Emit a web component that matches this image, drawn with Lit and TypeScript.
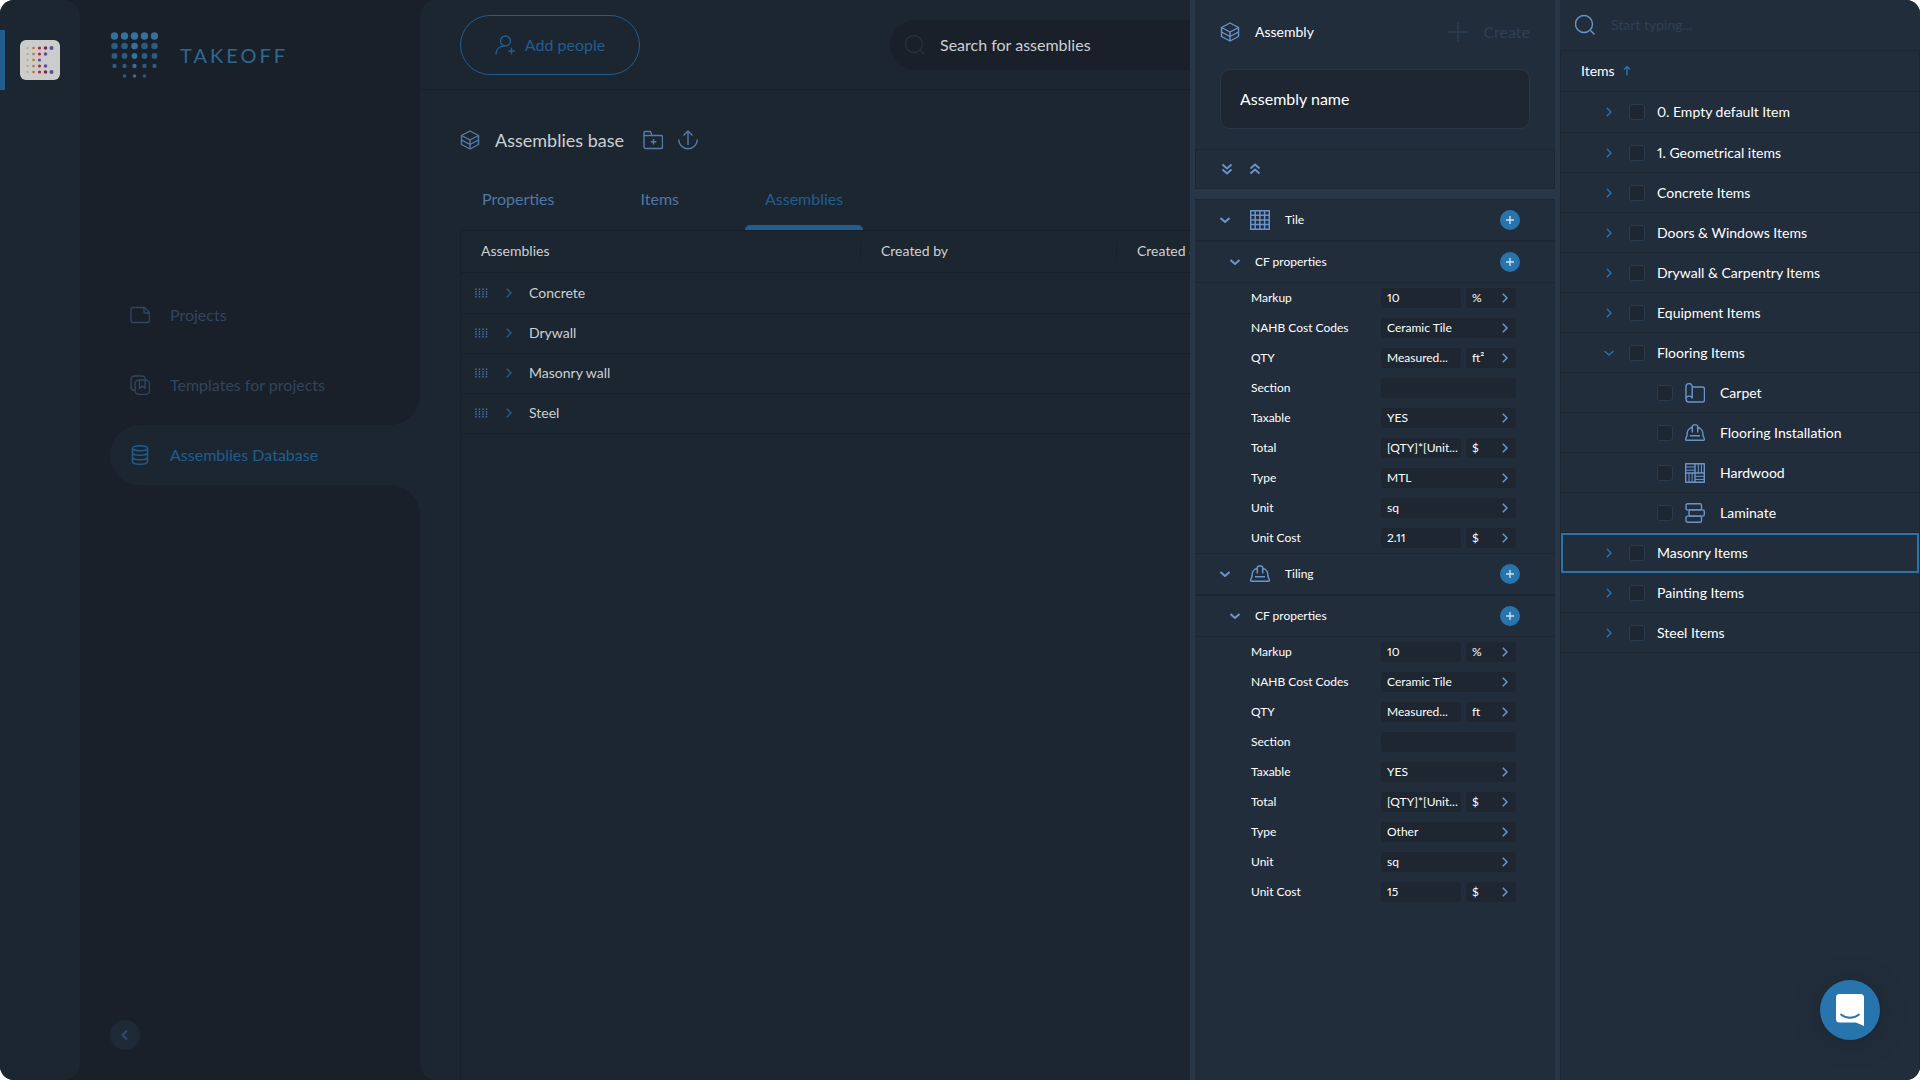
import { LitElement, html, css, svg, nothing } from "lit";
import { customElement, property, state } from "lit/decorators.js";
import { classMap } from "lit/directives/class-map.js";

const icons: Record<string, unknown> = {
  cube: svg`<path d="M10 1 18.5 5.5v9L10 19l-8.500-4.500v-9z"/><path d="M1.500 5.500 10 10l8.500-4.500M1.500 10l8.500 4.500L18.500 10M10 10v9"/>`,
  addPerson: svg`<circle cx="10.500" cy="6" r="5"/><path d="M1 19.500c0-5 3-8.500 8.500-8.500M16.500 12.500v7M13 16h7"/>`,
  search: svg`<circle cx="9" cy="9" r="8.500"/><path d="m15.500 15.500 4 4"/>`,
  project: svg`<path d="M3 2.500h11.500l5 5v8a2 2 0 0 1-2 2H3a2 2 0 0 1-2-2v-11a2 2 0 0 1 2-2z"/><path d="M14 2.500V7a1 1 0 0 0 1 1h4.500"/>`,
  templates: svg`<path d="M5 15.500c-2.500 0-4-1.500-4-4V5c0-2.500 1.500-4 4-4h6.500c2.500 0 4 1.500 4 4"/><rect x="5" y="5" width="14.500" height="14.500" rx="4"/><path d="M9.500 5v8.500l2.800-2.500 2.700 2.500V5"/>`,
  database: svg`<ellipse cx="10" cy="3.200" rx="7.500" ry="2.500"/><path d="M2.500 3.200v13.600c0 3.300 15 3.300 15 0V3.200M2.500 7.800c0 3.300 15 3.300 15 0M2.500 12.300c0 3.300 15 3.300 15 0"/>`,
  folder: svg`<path d="M1 17V2.500a1 1 0 0 1 1-1h5.500l1.500 4h9a1.500 1.500 0 0 1 1.500 1.500v10a1.500 1.500 0 0 1-1.500 1.500H2.500A1.500 1.500 0 0 1 1 17zM1 5.500h8M10.500 9v5.500M7.800 11.800h5.500"/>`,
  upload: svg`<path d="M10 15V1M5.500 5.500 10 1l4.500 4.500M.7 9.500a9.300 9.300 0 0 0 18.600 0"/>`,
  plus: svg`<path d="M10 .5v19M.5 10h19"/>`,
  plusSmall: svg`<path d="M10 6v8M6 10h8"/>`,
  right: svg`<path d="m7.800 5.800 4.200 4.200-4.200 4.200"/>`,
  left: svg`<path d="m12 5.500-4.500 4.500 4.500 4.500"/>`,
  down: svg`<path d="m5.500 8 4.500 4 4.500-4"/>`,
  expandAll: svg`<path d="m5.500 5.500 4.500 4 4.500-4M5.500 10.500l4.500 4 4.500-4"/>`,
  collapseAll: svg`<path d="m5.500 9.500 4.500-4 4.500 4M5.500 14.500l4.500-4 4.500 4"/>`,
  sortUp: svg`<path d="M10 14.500v-9M7 8.500l3-3 3 3"/>`,
  drag: svg`<path stroke-dasharray="1.500 1" d="M5 5.500v9M8.500 5.500v9M12 5.500v9M15.500 5.500v9"/>`,
  tile: svg`<path d="M.7.700h18.600v18.600H.7zM5.200.700v18.600M9.900.700v18.600M14.600.700v18.600M.7 5.200h18.600M.7 9.900h18.600M.7 14.600h18.600"/>`,
  helmet: svg`<path d="M2.200 12.500C1.700 8.500 3.700 5 7.300 4.200M12.700 4.200c3.600.800 5.600 4.300 5.100 8.300M2.200 12l-1.500 3.800a1 1 0 0 0 1 1.500h16.600a1 1 0 0 0 1-1.500L17.800 12M7.300 9.500V3.800c0-1.200.900-1.900 1.900-1.900h1.600c1 0 1.900.700 1.900 1.900v5.700M5 12.800h10"/>`,
  carpet: svg`<path d="M1 16V3.700a3.100 3.100 0 0 1 6.200 0v11.800M7.200 4h10.300a2 2 0 0 1 2 2v11a2 2 0 0 1-2 2H4a3 3 0 0 1-3-3c.3-3.600 5.600-3.800 6.200-.5"/>`,
  hardwood: svg`<path d="M.7.700h18.600v18.600H.7zM10 .7v18.600M.7 10h18.600"/><path stroke-width="1" d="M.7 4H10M.7 7.200H10M13.300.700V10M16.400.700V10M4 10v9.300M7.100 10v9.300M10 13.300h9.300M10 16.400h9.300"/>`,
  laminate: svg`<rect x="1" y=".7" width="15.500" height="6.200" rx="1.500"/><rect x="4" y="6.900" width="15.300" height="6.200" rx="1.500"/><rect x="1" y="13.100" width="15.500" height="6.200" rx="1.500"/>`,
};

const icon = (name: string, cls = "") => html`
  <svg class="icon ${cls}" viewBox="0 0 20 20" aria-hidden="true">${icons[name]}</svg>
`;

const base = css`
  *,
  *::before,
  *::after {
    box-sizing: border-box;
  }
  button,
  input {
    font: inherit;
    color: inherit;
    margin: 0;
    padding: 0;
    border: 0;
    background: none;
    outline: none;
  }
  button {
    cursor: pointer;
    text-align: left;
  }
  a {
    color: inherit;
    text-decoration: none;
  }
  ul {
    list-style: none;
    margin: 0;
    padding: 0;
  }
  .icon {
    display: block;
    flex: none;
    width: 20px;
    height: 20px;
    fill: none;
    stroke: currentColor;
    stroke-width: 1.4;
    stroke-linejoin: round;
  }
`;

@customElement("nav-sidebar")
class NavSidebar extends LitElement {
  @state() private active = "Assemblies Database";

  static styles = [
    base,
    css`
      :host {
        display: flex;
        flex-direction: column;
        flex: none;
        width: 340px;
        padding: 32px 0 30px 30px;
      }
      .brand {
        display: flex;
        align-items: center;
        gap: 22px;
        color: #2d6991;
        font-size: 20px;
        line-height: 46px;
        letter-spacing: 3px;
      }
      .dots {
        width: 48px;
        height: 46px;
        fill: #2a5c81;
      }
      .dots .lit {
        fill: #34719c;
      }
      nav {
        margin-top: 207px;
      }
      ul {
        display: grid;
        gap: 10px;
      }
      .link {
        display: flex;
        align-items: center;
        gap: 20px;
        height: 60px;
        padding-left: 20px;
        color: #31455e;
        border-radius: 30px 0 0 30px;
        position: relative;
      }
      .link.active {
        background: #1c2630;
        color: #215d8f;
      }
      .link.active::before,
      .link.active::after {
        content: "";
        position: absolute;
        right: 0;
        width: 30px;
        height: 30px;
      }
      .link.active::before {
        bottom: 100%;
        background: radial-gradient(circle at 0 0, transparent 30px, #1c2630 30px);
      }
      .link.active::after {
        top: 100%;
        background: radial-gradient(circle at 0 100%, transparent 30px, #1c2630 30px);
      }
      .collapse {
        display: grid;
        place-items: center;
        width: 30px;
        height: 30px;
        margin-top: auto;
        border-radius: 50%;
        background: #1e2a36;
        color: #35496a;
      }
      .collapse .icon {
        stroke-width: 2;
      }
    `,
  ];

  private dots() {
    const radii = [3.7, 3.3, 2.9, 2.2, 1.8];
    return radii.flatMap((r, row) =>
      [0, 1, 2, 3, 4]
        .filter((col) => row < 4 || (col > 0 && col < 4))
        .map(
          (col) => svg`<circle class=${row === 0 || col === 2 ? "lit" : "dim"}
            cx=${4.5 + col * 10} cy=${4 + row * 10} r=${r}></circle>`
        )
    );
  }

  render() {
    const links = [
      ["project", "Projects"],
      ["templates", "Templates for projects"],
      ["database", "Assemblies Database"],
    ];
    return html`
      <div class="brand">
        <svg class="dots" viewBox="0 0 48 46" aria-hidden="true">${this.dots()}</svg>
        <span>TAKEOFF</span>
      </div>
      <nav>
        <ul>
          ${links.map(
            ([glyph, label]) => html`<li>
              <a
                href="#"
                class=${classMap({ link: true, active: label === this.active })}
                @click=${(e: Event) => {
                  e.preventDefault();
                  this.active = label;
                }}
                >${icon(glyph)}<span>${label}</span></a
              >
            </li>`
          )}
        </ul>
      </nav>
      <button class="collapse" aria-label="Collapse menu">${icon("left")}</button>
    `;
  }
}

@customElement("assemblies-page")
class AssembliesPage extends LitElement {
  @state() private tab = "Assemblies";

  static styles = [
    base,
    css`
      :host {
        display: block;
        flex: 1;
        min-width: 0;
        overflow: hidden;
        background: #1c2630;
        border-radius: 16px 0 0 16px;
        color: #cdd0d3;
      }
      header {
        display: flex;
        align-items: center;
        gap: 250px;
        height: 90px;
        padding-left: 40px;
        border-bottom: 1px solid #192029;
      }
      .add {
        display: flex;
        align-items: center;
        justify-content: center;
        gap: 10px;
        flex: none;
        width: 180px;
        height: 60px;
        border: 1px solid #215d8f;
        border-radius: 30px;
        color: #215d8f;
      }
      .search {
        display: flex;
        align-items: center;
        gap: 15px;
        flex: none;
        width: 500px;
        height: 50px;
        padding-left: 15px;
        border-radius: 25px;
        background: #192029;
      }
      .search .icon {
        color: #26313e;
      }
      .search input {
        flex: 1;
      }
      .search input::placeholder {
        color: #cdd0d3;
        opacity: 1;
      }
      .title {
        display: flex;
        align-items: center;
        gap: 15px;
        padding: 35px 0 0 40px;
        color: #567cab;
      }
      h1 {
        min-width: 133px;
        margin: 0;
        font-size: 18px;
        font-weight: 400;
        line-height: 30px;
        color: #cdd0d3;
      }
      .tabs {
        display: flex;
        gap: 46px;
        padding: 15px 0 0 42px;
      }
      .tab {
        height: 60px;
        padding: 0 20px 2px;
        color: #4f77a8;
      }
      .tab.active {
        color: #215d8f;
        position: relative;
      }
      .tab.active::after {
        content: "";
        position: absolute;
        left: 0;
        right: 0;
        bottom: 0;
        height: 5px;
        border-radius: 5px 5px 0 0;
        background: #215d8f;
      }
      .sheet {
        margin-left: 40px;
        min-height: calc(100vh - 230px);
        border: solid #192029;
        border-width: 1px 0 0 1px;
      }
      table {
        width: 1060px;
        border-collapse: collapse;
        table-layout: fixed;
        font-size: 14px;
        line-height: 20px;
      }
      .first {
        width: 399px;
      }
      .second {
        width: 256px;
      }
      th,
      td {
        height: 40px;
        padding: 0;
        font-weight: 400;
        text-align: left;
        border-bottom: 1px solid #192029;
      }
      th {
        padding-left: 20px;
      }
      th,
      tbody tr:first-child td {
        height: 41px;
      }
      .head-cell {
        display: block;
      }
      th + th .head-cell {
        margin-left: -20px;
        padding-left: 20px;
        border-left: 1px solid #192029;
      }
      .name {
        display: flex;
        align-items: center;
        gap: 8px;
        padding-left: 10px;
      }
      .name span {
        padding-left: 2px;
      }
      .grip {
        color: #4c72ae;
      }
      .open {
        color: #215d8f;
      }
    `,
  ];

  render() {
    return html`
      <header>
        <button class="add">${icon("addPerson")}<span>Add people</span></button>
        <label class="search">
          ${icon("search")}
          <input type="search" placeholder="Search for assemblies" aria-label="Search for assemblies" />
        </label>
      </header>
      <div class="title">
        ${icon("cube")}
        <h1>Assemblies base</h1>
        <button aria-label="New folder">${icon("folder")}</button>
        <button aria-label="Upload">${icon("upload")}</button>
      </div>
      <div class="tabs" role="tablist">
        ${["Properties", "Items", "Assemblies"].map(
          (t) => html`<button
            role="tab"
            aria-selected=${t === this.tab}
            class=${classMap({ tab: true, active: t === this.tab })}
            @click=${() => (this.tab = t)}
          >
            ${t}
          </button>`
        )}
      </div>
      <div class="sheet">
        <table>
          <thead>
            <tr>
              <th class="first"><span class="head-cell">Assemblies</span></th>
              <th class="second"><span class="head-cell">Created by</span></th>
              <th><span class="head-cell">Created on</span></th>
            </tr>
          </thead>
          <tbody>
            ${["Concrete", "Drywall", "Masonry wall", "Steel"].map(
              (name) => html`<tr>
                <td>
                  <div class="name">
                    ${icon("drag", "grip")}
                    <button class="open" aria-label="Expand ${name}">${icon("right")}</button>
                    <span>${name}</span>
                  </div>
                </td>
                <td></td>
                <td></td>
              </tr>`
            )}
          </tbody>
        </table>
      </div>
    `;
  }
}

interface Prop {
  label: string;
  value: string;
  unit?: string;
  free?: boolean;
}

const properties = (qtyUnit: string, type: string, cost: string): Prop[] => [
  { label: "Markup", value: "10", unit: "%" },
  { label: "NAHB Cost Codes", value: "Ceramic Tile" },
  { label: "QTY", value: "Measured...", unit: qtyUnit },
  { label: "Section", value: "", free: true },
  { label: "Taxable", value: "YES" },
  { label: "Total", value: "[QTY]*[Unit...", unit: "$" },
  { label: "Type", value: type },
  { label: "Unit", value: "sq" },
  { label: "Unit Cost", value: cost, unit: "$" },
];

@customElement("assembly-section")
class AssemblySection extends LitElement {
  @property() name = "";
  @property() glyph = "tile";
  @property({ attribute: false }) props: Prop[] = [];

  static styles = [
    base,
    css`
      :host {
        display: block;
        font-size: 12px;
        line-height: 20px;
        font-variant-numeric: proportional-nums;
        border-top: 1px solid #1d2631;
      }
      .head {
        display: flex;
        align-items: center;
        height: 42px;
        padding: 0 35px 0 20px;
        border-bottom: 2px solid #1d2631;
        color: #6a95cc;
      }
      .head.sub {
        height: 41px;
        padding-left: 30px;
        border-bottom-width: 1px;
      }
      .glyph {
        margin: 0 15px 0 15px;
      }
      .head .glyph {
        stroke-width: 1.5;
      }
      .head h2,
      .head h3 {
        flex: 1;
        margin: 0;
        font-size: 12px;
        font-weight: 400;
        color: #fff;
      }
      .head h3 {
        padding-left: 10px;
      }
      .toggle .icon {
        stroke-width: 2;
      }
      .add {
        border-radius: 50%;
        background: #2874ad;
        color: #cfe0ee;
      }
      .row {
        display: grid;
        grid-template-columns: 1fr 135px;
        align-items: center;
        height: 30px;
        padding: 0 39px 0 56px;
      }
      .fields {
        display: flex;
        gap: 5px;
      }
      .field {
        display: flex;
        align-items: center;
        justify-content: space-between;
        flex: 1;
        width: 80px;
        min-width: 0;
        height: 20px;
        padding: 0 1px 0 6px;
        border-radius: 4px;
        background: #1d2631;
      }
      .unit {
        flex: none;
        width: 50px;
      }
      .field .icon {
        color: #6a95cc;
        stroke-width: 1.6;
      }
    `,
  ];

  render() {
    return html`
      <div class="head">
        <button class="toggle" aria-label="Toggle ${this.name}">${icon("down")}</button>
        ${icon(this.glyph, "glyph")}
        <h2>${this.name}</h2>
        <button class="add" aria-label="Add to ${this.name}">${icon("plusSmall")}</button>
      </div>
      <div class="head sub">
        <button class="toggle" aria-label="Toggle CF properties">${icon("down")}</button>
        <h3>CF properties</h3>
        <button class="add" aria-label="Add CF property">${icon("plusSmall")}</button>
      </div>
      ${this.props.map((p, i) => {
        const picker = !p.unit && !p.free;
        return html`<div class="row">
          <label for="f${i}">${p.label}</label>
          <div class="fields">
            ${picker
              ? html`<button class="field" id="f${i}"><span>${p.value}</span>${icon("right")}</button>`
              : html`<input class="field" id="f${i}" type="text" .value=${p.value} />`}
            ${p.unit
              ? html`<button class="field unit" aria-label="Unit of ${p.label}">
                  <span>${p.unit}</span>${icon("right")}
                </button>`
              : nothing}
          </div>
        </div>`;
      })}
    `;
  }
}

@customElement("assembly-panel")
class AssemblyPanel extends LitElement {
  static styles = [
    base,
    css`
      :host {
        display: block;
        flex: none;
        width: 370px;
        background: #222d3b;
        border: solid #283747;
        border-width: 0 5px;
      }
      header {
        display: flex;
        align-items: center;
        gap: 15px;
        height: 64px;
        padding: 0 25px;
        color: #6a95cc;
      }
      h2 {
        flex: 1;
        margin: 0;
        font-size: 14px;
        font-weight: 400;
        color: #fff;
      }
      .create {
        display: flex;
        align-items: center;
        gap: 15px;
        color: #2e4055;
      }
      .name {
        display: block;
        width: calc(100% - 50px);
        height: 60px;
        margin: 5px 25px 20px;
        padding: 0 19px 2px;
        border: 1px solid #283747;
        border-radius: 10px;
        background: #1d2631;
      }
      .name::placeholder {
        color: #fff;
        opacity: 1;
      }
      .tools {
        display: flex;
        align-items: center;
        gap: 8px;
        height: 40px;
        padding-left: 21px;
        border: 1px solid #1d2631;
        color: #6a95cc;
      }
      .tools .icon {
        stroke-width: 1.8;
      }
      .band {
        height: 10px;
        background: #283747;
      }
    `,
  ];

  render() {
    return html`
      <header>
        ${icon("cube")}
        <h2>Assembly</h2>
        <button class="create">${icon("plus")}<span>Create</span></button>
      </header>
      <input class="name" type="text" placeholder="Assembly name" aria-label="Assembly name" />
      <div class="tools">
        <button aria-label="Expand all">${icon("expandAll")}</button>
        <button aria-label="Collapse all">${icon("collapseAll")}</button>
      </div>
      <div class="band"></div>
      <assembly-section name="Tile" glyph="tile" .props=${properties("ft²", "MTL", "2.11")}></assembly-section>
      <assembly-section name="Tiling" glyph="helmet" .props=${properties("ft", "Other", "15")}></assembly-section>
    `;
  }
}

interface Item {
  name: string;
  glyph?: string;
  open?: boolean;
}

const items: Item[] = [
  { name: "0. Empty default Item" },
  { name: "1. Geometrical items" },
  { name: "Concrete Items" },
  { name: "Doors & Windows Items" },
  { name: "Drywall & Carpentry Items" },
  { name: "Equipment Items" },
  { name: "Flooring Items", open: true },
  { name: "Carpet", glyph: "carpet" },
  { name: "Flooring Installation", glyph: "helmet" },
  { name: "Hardwood", glyph: "hardwood" },
  { name: "Laminate", glyph: "laminate" },
  { name: "Masonry Items" },
  { name: "Painting Items" },
  { name: "Steel Items" },
];

@customElement("items-panel")
class ItemsPanel extends LitElement {
  @state() private selected = "Masonry Items";

  static styles = [
    base,
    css`
      :host {
        display: flex;
        flex-direction: column;
        flex: none;
        width: 360px;
        background: #222d3b;
        font-size: 14px;
        line-height: 20px;
        font-variant-numeric: proportional-nums;
      }
      .search {
        display: flex;
        align-items: center;
        gap: 16px;
        height: 50px;
        padding: 0 15px;
        color: #6a95cc;
      }
      .search input {
        flex: 1;
        color: #fff;
      }
      .search input::placeholder {
        color: #2e4055;
        opacity: 1;
      }
      .tree {
        flex: 1;
        border: 1px solid #1d2631;
        border-bottom: 0;
      }
      .head {
        display: flex;
        align-items: center;
        width: 100%;
        height: 41px;
        padding-left: 20px;
        border-bottom: 1px solid #1d2631;
      }
      .head .icon {
        margin-left: 2px;
        color: #2874ad;
      }
      .row {
        display: flex;
        align-items: center;
        height: 40px;
        padding-left: 38px;
        border-bottom: 1px solid #1d2631;
      }
      .row:first-child {
        height: 41px;
      }
      .row.child {
        padding-left: 96px;
      }
      .row.selected {
        padding-left: 36px;
        border: 2px solid #2874ad;
      }
      .arrow {
        margin-right: 10px;
        color: #2874ad;
      }
      input[type="checkbox"] {
        appearance: none;
        width: 16px;
        height: 16px;
        margin-right: 12px;
        border: 1px solid #2c3c4e;
        border-radius: 3px;
        background: #1d2631;
      }
      label {
        display: flex;
        align-items: center;
        gap: 15px;
      }
      label .icon {
        color: #6a95cc;
      }
    `,
  ];

  render() {
    return html`
      <label class="search">
        ${icon("search")}
        <input type="search" placeholder="Start typing..." aria-label="Search items" />
      </label>
      <div class="tree">
        <button class="head">Items${icon("sortUp")}</button>
        <ul>
          ${items.map(
            (item, i) => html`<li
              class=${classMap({ row: true, child: !!item.glyph, selected: item.name === this.selected })}
              @click=${() => (this.selected = item.name)}
            >
              ${item.glyph
                ? nothing
                : html`<button class="arrow" aria-label="Toggle ${item.name}">
                    ${icon(item.open ? "down" : "right")}
                  </button>`}
              <input type="checkbox" id="i${i}" />
              <label for="i${i}">${item.glyph ? icon(item.glyph) : nothing}<span>${item.name}</span></label>
            </li>`
          )}
        </ul>
      </div>
    `;
  }
}

@customElement("app-root")
class AppRoot extends LitElement {
  static styles = [
    base,
    css`
      :host {
        display: block;
        background: #fff;
        font-family: Lato, "Open Sans", sans-serif;
        font-size: 16px;
        line-height: 20px;
        color: #fff;
      }
      .app {
        display: flex;
        min-height: 100vh;
        border-radius: 14px;
        overflow: hidden;
        background: #192029;
      }
      .rail {
        flex: none;
        width: 80px;
        padding-top: 30px;
        border-radius: 0 16px 16px 0;
        background: #1c2630;
      }
      .workspace {
        display: flex;
        align-items: center;
        width: 100%;
        height: 60px;
        padding-left: 15px;
        border-left: 5px solid #215d8f;
        border-radius: 0 4px 4px 0;
      }
      .workspace svg {
        width: 40px;
        height: 40px;
        border-radius: 6px;
        background: #ccc;
      }
      .chat {
        position: fixed;
        right: 40px;
        bottom: 40px;
        display: grid;
        place-items: center;
        width: 60px;
        height: 60px;
        border-radius: 50%;
        background: #2874ad;
        box-shadow: 0 1px 6px rgba(0, 0, 0, 0.06), 0 2px 32px rgba(0, 0, 0, 0.16);
      }
      .chat svg {
        width: 28px;
        height: 32px;
      }
    `,
  ];

  private mark() {
    const colors = ["#c9a24a", "#bd7436", "#b02a3c", "#6e3144", "#5c4a9e"];
    const radii = [1, 1.3, 1.6, 1.8, 2];
    const counts = [5, 4, 3, 4, 5];
    return counts.flatMap((n, row) =>
      Array.from({ length: n }, (_, col) => {
        const last = col === n - 1;
        return svg`<circle cx=${7.5 + col * 6} cy=${8 + row * 6} r=${radii[col]}
          fill=${last ? colors[4] : colors[col]}></circle>`;
      })
    );
  }

  render() {
    return html`
      <div class="app">
        <aside class="rail">
          <button class="workspace" aria-label="Workspace">
            <svg viewBox="0 0 40 40" aria-hidden="true">${this.mark()}</svg>
          </button>
        </aside>
        <nav-sidebar></nav-sidebar>
        <assemblies-page></assemblies-page>
        <assembly-panel></assembly-panel>
        <items-panel></items-panel>
      </div>
      <button class="chat" aria-label="Open chat">
        <svg viewBox="0 0 28 32" aria-hidden="true">
          <path fill="#fff" d="M3.5 0h21A3.500 3.500 0 0 1 28 3.500V32l-8-3.500H3.500A3.500 3.500 0 0 1 0 25V3.500A3.500 3.500 0 0 1 3.500 0z" />
          <path fill="none" stroke="#2874ad" stroke-width="1.8" stroke-linecap="round" d="M5 20.500c5 4.300 13 4.300 18 0" />
        </svg>
      </button>
    `;
  }
}
